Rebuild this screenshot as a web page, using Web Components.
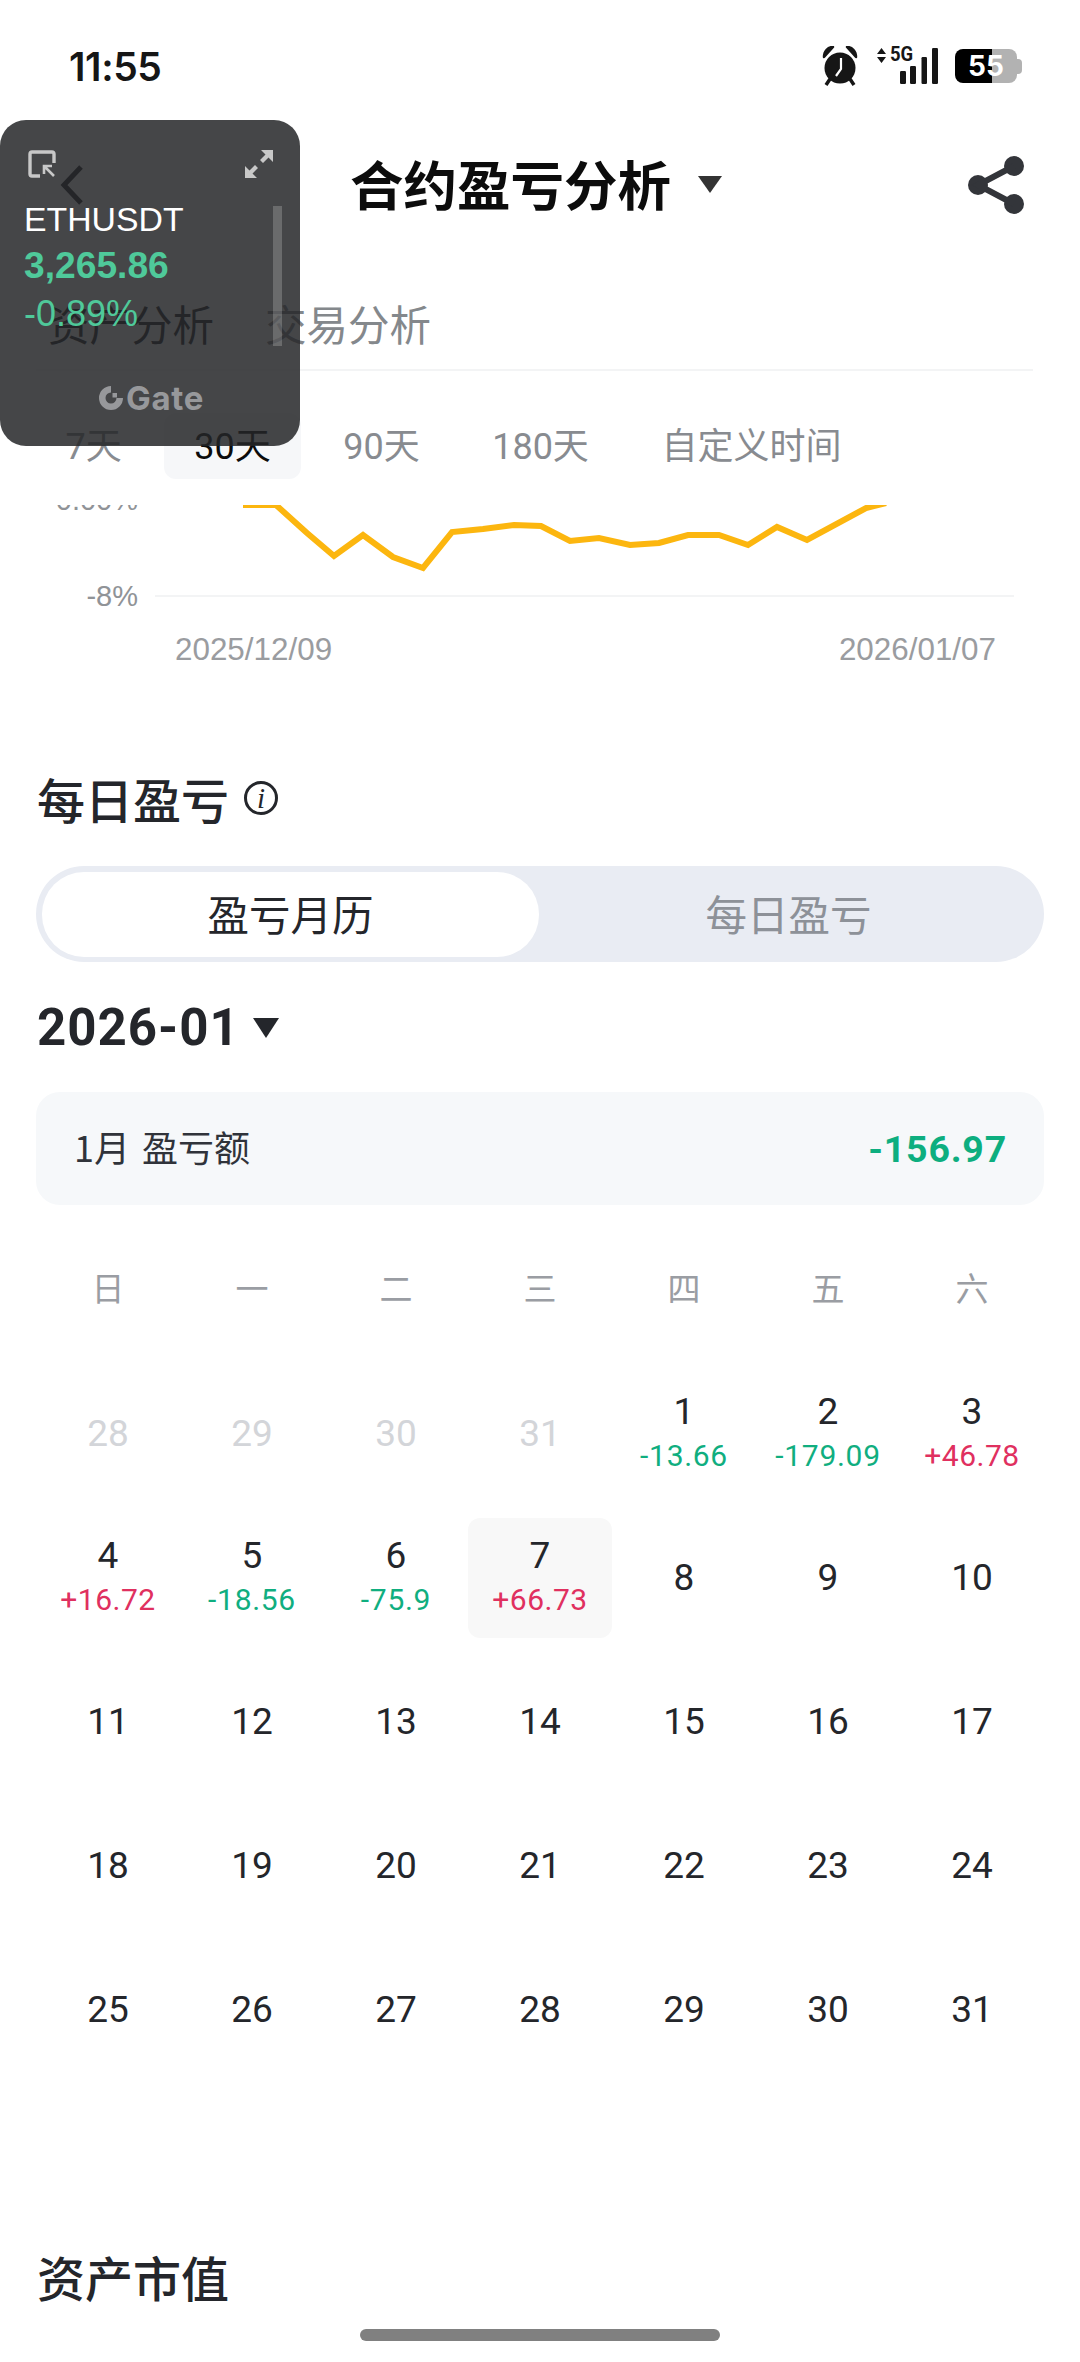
<!DOCTYPE html>
<html lang="zh">
<head>
<meta charset="utf-8">
<title>合约盈亏分析</title>
<style>
html, body { margin: 0; background: #fff; }
body { position: relative; width: 1080px; height: 2362px; overflow: hidden; color: #24262b; font-family: "Noto Sans CJK SC", "Noto Sans", sans-serif; }
</style>
</head>
<body>
<status-bar></status-bar>
<app-header>合约盈亏分析</app-header>
<tab-row><span>资产分析</span><span>交易分析</span></tab-row>
<range-chips></range-chips>
<pnl-chart></pnl-chart>
<section-title style="margin-top:85px" info>每日盈亏</section-title>
<seg-toggle></seg-toggle>
<month-picker>2026-01</month-picker>
<month-summary label="1月 盈亏额" value="-156.97"></month-summary>
<pnl-calendar></pnl-calendar>
<section-title style="margin-top:176px">资产市值</section-title>
<pip-window></pip-window>
<home-bar></home-bar>

<script>
const CJK = '"Noto Sans CJK SC", "Noto Sans", sans-serif';
const NUM = 'Roboto, "Noto Sans CJK SC", sans-serif';

function def(name, css, html, setup) {
  customElements.define(name, class extends HTMLElement {
    constructor() {
      super();
      this.attachShadow({ mode: "open" });
    }
    connectedCallback() {
      const h = typeof html == "function" ? html(this) : html;
      this.shadowRoot.innerHTML = "<style>" + css + "</style>" + h;
      setup && setup(this);
    }
  });
}

def("status-bar", `
  :host { display: flex; align-items: center; justify-content: space-between; height: 132px; padding: 0 58px 0 69px; box-sizing: border-box; color: #161616; }
  .time { font: 600 39px Inter, sans-serif; letter-spacing: -.4px; }
  .right { display: flex; align-items: center; }
  .net { position: relative; width: 62px; height: 38px; margin-left: 18px; }
  .net svg { display: block; }
  .g { position: absolute; left: 14px; top: -5px; font: 700 21px/24px Roboto, sans-serif; transform: scaleX(.88); transform-origin: left; }
  .batt { position: relative; display: flex; justify-content: center; align-items: center; width: 62px; height: 34px; margin-left: 17px; border-radius: 8px; overflow: hidden; background: linear-gradient(90deg, #000 37px, #b2b2b2 37px); color: #fff; font: 700 28px/34px Inter, sans-serif; }
  .nub { width: 5px; height: 15px; background: #b2b2b2; border-radius: 0 4px 4px 0; }
`, `
  <span class="time">11:55</span>
  <div class="right">
    <svg width="36" height="40" viewBox="0 0 36 40">
      <circle cx="18" cy="22" r="15.5" fill="#161616"/>
      <path d="M2 11C2 5 6 1 11 1L2 11ZM34 11C34 5 30 1 25 1L34 11Z" fill="#161616" stroke="#161616" stroke-width="2.5" stroke-linejoin="round"/>
      <path d="M8 33L4 39M28 33L32 39" stroke="#161616" stroke-width="3.5"/>
      <path d="M19 12V23L14 30" fill="none" stroke="#fff" stroke-width="2.2"/>
    </svg>
    <div class="net">
      <svg width="62" height="38" viewBox="0 0 62 38">
        <path d="M1 7L5.500 1L10 7ZM1 10L5.500 16L10 10Z" fill="#161616"/>
        <rect x="24" y="24" width="6" height="13" rx="1.2" fill="#161616"/>
        <rect x="34" y="19" width="6" height="18" rx="1.2" fill="#161616"/>
        <rect x="45.500" y="10" width="5.500" height="27" rx="1.2" fill="#161616"/>
        <rect x="56" y="1" width="6" height="36" rx="1.2" fill="#161616"/>
      </svg>
      <span class="g">5G</span>
    </div>
    <div class="batt">55</div><div class="nub"></div>
  </div>
`);

def("app-header", `
  :host { display: grid; grid-template-columns: 1fr auto 1fr; align-items: center; height: 106px; color: #0c0c0c; }
  .back { padding-left: 60px; display: flex; }
  .mid { display: flex; align-items: center; gap: 27px; margin-left: -8px; padding-bottom: 5px; font: 700 53.500px/70px ${CJK}; }
  .caret { width: 0; height: 0; border: 12px solid transparent; border-top: 17px solid #333; border-bottom: 0; margin-top: 4px; }
  .share { display: flex; justify-content: flex-end; padding-right: 54px; }
`, `
  <div class="back"><svg width="24" height="40" viewBox="0 0 24 40"><path d="M21 2L4 20L21 38" fill="none" stroke="#24262b" stroke-width="5"/></svg></div>
  <div class="mid"><slot></slot><span class="caret"></span></div>
  <div class="share"><svg width="58" height="58" viewBox="0 0 58 58" fill="#33353a"><circle cx="46" cy="10" r="10"/><circle cx="10" cy="29" r="10"/><circle cx="46" cy="48" r="10"/><path d="M46 10L10 29L46 48" fill="none" stroke="#33353a" stroke-width="6"/></svg></div>
`);

def("tab-row", `
  :host { display: flex; gap: 51px; height: 133px; padding: 36px 47px 0 48px; box-sizing: border-box; align-items: center; color: #84888c; font: 400 41.500px/60px ${CJK}; position: relative; }
  :host::after { content: ""; position: absolute; left: 36px; right: 47px; bottom: 0; height: 2px; background: #f3f4f5; }
  ::slotted(span:first-child) { color: #24262b; }
`, `<slot></slot>`);

def("range-chips", `
  :host { display: flex; gap: 11.500px; padding: 42px 0 26px 35px; color: #888b90; font: 400 36px/68px ${NUM}; height: 66px; }
  span { padding: 0 30.500px; border-radius: 12px; white-space: nowrap; font-family: ${NUM}; }
  .on { background: #f6f7f9; color: #0c0c0c; }
`, ["7天", "30天", "90天", "180天", "自定义时间"].map((t, i) => `<span class="${i == 1 ? "on" : ""}">${t}</span>`).join(""));

def("pnl-chart", `
  :host { display: block; overflow: hidden; height: 178px; }
  .plot { display: grid; grid-template-columns: 138px 1fr; height: 110px; color: #909397; font: 400 29px/40px "Liberation Sans", sans-serif; }
  .axis { display: flex; flex-direction: column; justify-content: space-between; text-align: right; margin-top: -25px; height: 136px; }
  svg { display: block; }
  .dates { display: flex; justify-content: space-between; padding: 15px 84px 0 175px; color: #9a9ca0; font: 400 31.400px/40px "Liberation Sans", sans-serif; }
`, `
  <div class="plot">
    <div class="axis"><span>0.00%</span><span>-8%</span></div>
    <svg width="942" height="110" viewBox="138 505 942 110">
      <path d="M155 596H1014" stroke="#f3f4f5" stroke-width="2"/>
      <path d="M243 505H276L307 533L334 556L363 535L393 557L423 568L452 532L483 529L514 525L541 526L570 541L599 538L630 545L659 543L688 535L719 535L748 545L777 527L807 540L866 508L886 503" fill="none" stroke="#fcb60f" stroke-width="6" stroke-linejoin="miter"/>
    </svg>
  </div>
  <div class="dates"><span>2025/12/09</span><span>2026/01/07</span></div>
`);

def("section-title", `
  :host { display: flex; align-items: center; gap: 15px; height: 60px; padding-left: 37px; font: 500 48px/60px ${CJK}; color: #24262b; }
  .i { display: flex; align-items: center; justify-content: center; width: 28px; height: 28px; border: 3.500px solid #24262b; border-radius: 50%; font: italic 400 29px/28px "Liberation Serif", serif; }
`, (el) => `<slot></slot>${el.hasAttribute("info") ? '<span class="i">i</span>' : ""}`);

def("seg-toggle", `
  :host { display: grid; grid-template-columns: 497px 1fr; height: 96px; margin: 38px 36px 0; padding: 6px 6px 5px; box-sizing: border-box; border-radius: 48px; background: #e9ecf3; font: 400 41.500px/82px ${CJK}; text-align: center; color: #8d9198; }
  .on { background: #fff; border-radius: 42px; color: #24262b; }
`, `<div class="on">盈亏月历</div><div>每日盈亏</div>`);

def("month-picker", `
  :host { display: flex; align-items: center; gap: 13px; height: 60px; margin-top: 36px; padding-left: 37px; font: 700 51px/60px ${NUM}; color: #24262b; letter-spacing: 1px; }
  .caret { width: 0; height: 0; border: 13.500px solid transparent; border-top: 20px solid #24262b; border-bottom: 0; }
`, `<slot></slot><span class="caret"></span>`);

def("month-summary", `
  :host { display: flex; align-items: center; justify-content: space-between; height: 113px; margin: 34px 36px 0; padding: 0 37px 0 38px; border-radius: 24px; background: #f6f8fa; }
  .l { font: 400 36px/46px ${CJK}; color: #30333a; word-spacing: 4px; margin-top: -5px; }
  .v { font: 700 37.500px/46px ${NUM}; color: #0dae7f; letter-spacing: .8px; }
`, (el) => `<span class="l">${el.getAttribute("label")}</span><span class="v">${el.getAttribute("value")}</span>`);

def("pnl-day", `
  :host { display: flex; flex-direction: column; align-items: center; justify-content: center; height: 120px; border-radius: 12px; color: #24262b; font: 400 37px/44px ${NUM}; }
  :host([off]) { color: #d3d5d9; }
  :host([today]) { background: #f8f8f8; }
  .p { font-size: 30px; letter-spacing: .7px; color: #10ae7f; }
  .p.up { color: #e0305f; letter-spacing: .5px; }
`, (el) => {
  const p = el.getAttribute("pnl");
  return `<slot></slot>` + (p ? `<span class="p ${p[0] == "+" ? "up" : ""}">${p}</span>` : "");
});

def("pnl-calendar", `
  :host { display: block; margin: 0 36px; margin-top: 57px; }
  .week { display: grid; grid-template-columns: repeat(7, 1fr); height: 50px; margin-bottom: 62px; text-align: center; color: #9a9da3; font: 400 33px/50px ${CJK}; }
  .days { display: grid; grid-template-columns: repeat(7, 1fr); row-gap: 24px; }
`, () => {
  const pnl = { 1: "-13.66", 2: "-179.09", 3: "+46.78", 4: "+16.72", 5: "-18.56", 6: "-75.9", 7: "+66.73" };
  let days = [28, 29, 30, 31].map((d) => `<pnl-day off>${d}</pnl-day>`).join("");
  for (let d = 1; d <= 31; d++)
    days += `<pnl-day ${pnl[d] ? `pnl="${pnl[d]}"` : ""} ${d == 7 ? "today" : ""}>${d}</pnl-day>`;
  return `<div class="week">${"日一二三四五六".split("").map((w) => `<span>${w}</span>`).join("")}</div><div class="days">${days}</div>`;
});

// floats over the page, content underneath shows through
def("pip-window", `
  :host { position: absolute; left: 0; top: 120px; width: 300px; height: 326px; box-sizing: border-box; padding: 30px 24px 0; border-radius: 26px; background: rgba(37, 38, 40, .85); color: #fff; font-family: "Liberation Sans", sans-serif; }
  .top { display: flex; justify-content: space-between; padding: 0 3px 0 4px; }
  .top svg { display: block; }
  .sym { margin-top: 18.500px; font-size: 33.800px; line-height: 44px; }
  .price { margin-top: 2px; font-size: 37.200px; line-height: 44px; font-weight: 700; color: #4fc99a; }
  .chg { margin-top: 5px; font-size: 36px; line-height: 44px; color: #4fc99a; }
  .bar { position: absolute; left: 273px; top: 86px; width: 9px; height: 140px; background: rgba(255, 255, 255, .2); }
  .logo { position: absolute; left: 99px; top: 264px; display: flex; align-items: center; gap: 3px; color: #97989b; font: 700 33px/28px Inter, sans-serif; letter-spacing: .7px; }
`, `
  <div class="top">
    <svg width="28" height="28" viewBox="0 0 28 28" fill="none" stroke="#c8c8c8" stroke-width="3.400">
      <path d="M26 13V4Q26 2 24 2H4Q2 2 2 4V24Q2 26 4 26H12"/>
      <path d="M26 26L17 17M16 24V16H24" stroke-width="2.600"/>
    </svg>
    <svg width="28" height="28" viewBox="0 0 28 28" fill="#c8c8c8">
      <path d="M28 0V12L23.500 7.500L18 13L15 10L20.500 4.500L16 0Z"/>
      <path d="M0 28V16L4.500 20.500L10 15L13 18L7.500 23.500L12 28Z"/>
    </svg>
  </div>
  <div class="sym">ETHUSDT</div>
  <div class="price">3,265.86</div>
  <div class="chg">-0.89%</div>
  <div class="bar"></div>
  <div class="logo">
    <svg width="24" height="24" viewBox="0 0 24 24" fill="#97989b"><path d="M12 0A12 12 0 1 0 24 12H17.500A5.500 5.500 0 1 1 12 6.500Z"/><rect x="13.500" y="7" width="4.500" height="4.500"/></svg>
    <span>Gate</span>
  </div>
`);

def("home-bar", `
  :host { position: absolute; left: 360px; top: 2329px; width: 360px; height: 12px; border-radius: 6px; background: #808080; }
`, ``);
</script>
</body>
</html>
